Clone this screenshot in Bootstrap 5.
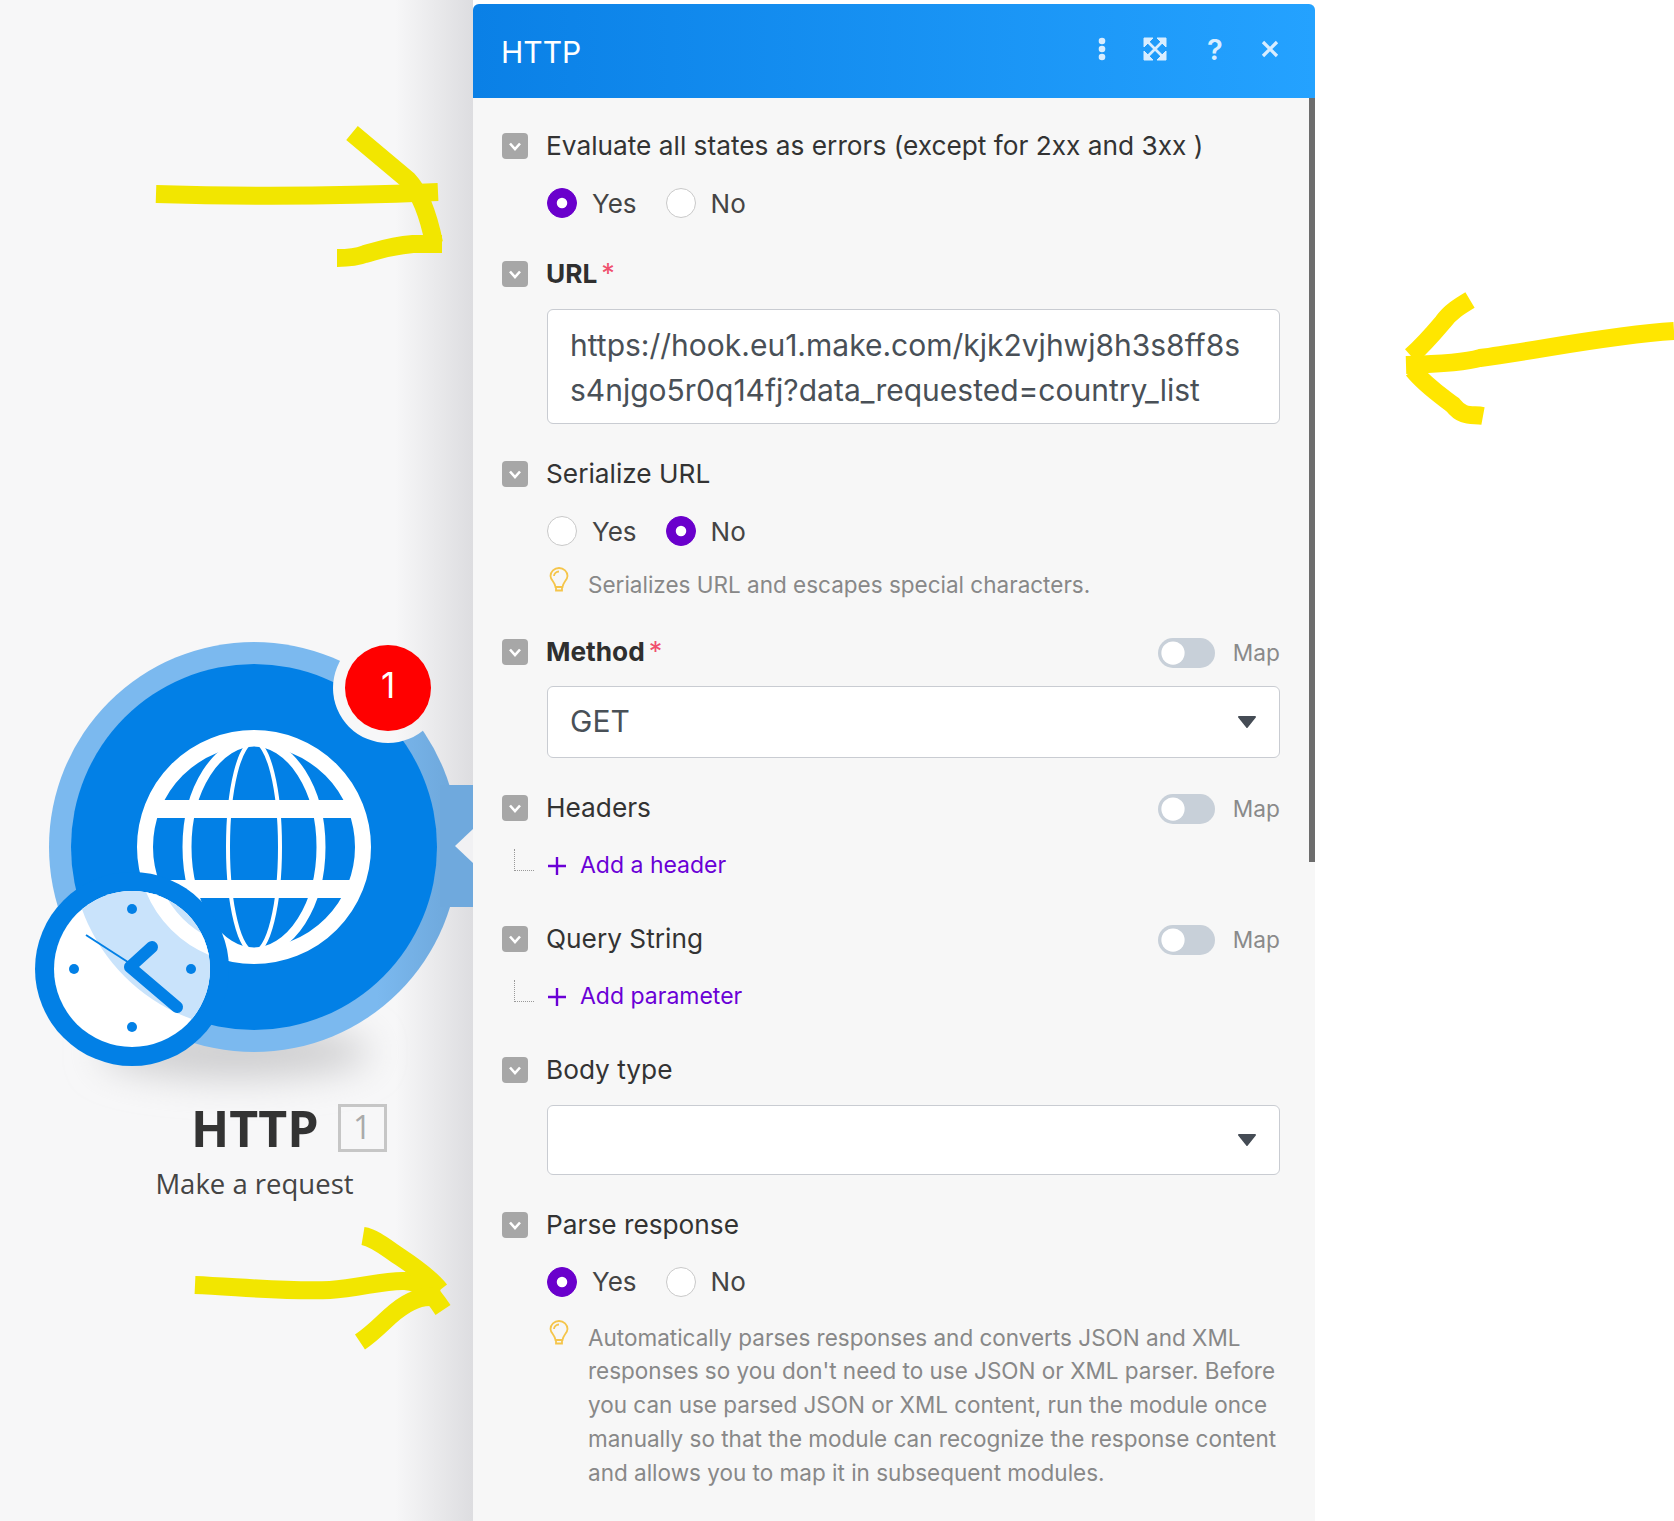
<!DOCTYPE html>
<html lang="en">
  <head>
    <meta charset="UTF-8" />
    <title>HTTP module</title>
    <link href="https://cdn.jsdelivr.net/npm/bootstrap@5.3.3/dist/css/bootstrap.min.css" rel="stylesheet" />
    <style>
      html, body { height: 1521px; overflow: hidden; background: #fff; }
      body { font-family: Inter, "Liberation Sans", sans-serif; position: relative; }
      .canvas-col {
        width: 473px; height: 1521px; padding-top: 640px; flex: none;
        background: linear-gradient(to right, #f7f7f8 0, #f7f7f8 395px, #dddde0 473px);
      }
      .node-art { display: block; width: 473px; height: 440px; overflow: visible; }
      .node-name { padding-left: 191px; margin-top: 24px; height: 48px; gap: 19px; position: relative; }
      .node-name b { font: 700 50px/48px "Open Sans", sans-serif; color: #333; }
      .node-num { width: 49px; height: 48px; border: 3px solid #c6c6c6; color: #aaa; font: 400 32px/40px "Open Sans", sans-serif; text-align: center; }
      .node-desc { width: 509px; margin-top: 12px; text-align: center; font: 400 27.500px/40px "Open Sans", sans-serif; color: #444; position: relative; }

      .panel-box { width: 842px; height: 1517px; margin-top: 4px; flex: none; background: #f7f7f7; position: relative; overflow: hidden; border-radius: 6px 6px 0 0; }
      .panel-head { height: 94px; padding: 0 35px 4px 28px; background: linear-gradient(to right, #0a80e6, #24a2ff); color: #fff; font-size: 30px; }
      .panel-head svg { display: block; }
      .head-title { margin-top: 6px; }
      .tool-gap-a { margin-left: 37px; }
      .tool-gap-b { margin-left: 34px; }
      .tool-help { width: 22px; text-align: center; color: #d8edff; font-size: 29px; font-weight: 600; line-height: 1; }
      .panel-body { padding: 31px 35px 0 29px; }
      .scroll-thumb { position: absolute; right: 0; top: 94px; width: 6px; height: 764px; background: #6d6d6d; }

      .label-row { height: 34px; font-size: 26.250px; line-height: 34px; color: #333; }
      .label-row b { font-weight: 700; color: #2f2f2f; }
      .req { color: #f0506e; font-size: 27px; margin-left: 4px; line-height: 30px; }
      .fold-box { width: 26px; height: 26px; border-radius: 4px; background: #a7a7a7; margin-right: 18px; flex: none; }
      .fold-box svg { display: block; }
      .block-gap { margin-top: 33px; }
      .gap-url { margin-top: 37px; }
      .gap-wide { margin-top: 39px; }
      .sub-row { margin-left: 45px; margin-top: 23px; height: 34px; gap: 29px; font-size: 26px; color: #444; }
      .sub-row .form-check { min-height: 0; padding: 0; margin: 0; gap: 15px; }
      .form-check-input[type=radio] {
        width: 30px; height: 30px; margin: 0; float: none; border: 1px solid #c9c9c9; background-color: #fff;
      }
      .form-check-input[type=radio]:checked {
        background-color: #6a00cc; border-color: #6a00cc;
        background-image: url("data:image/svg+xml,%3csvg xmlns='http://www.w3.org/2000/svg' viewBox='-4 -4 8 8'%3e%3ccircle r='1.5' fill='%23fff'/%3e%3c/svg%3e");
      }
      .map-toggle { gap: 18px; color: #8a8a8a; font-size: 22.700px; margin-top: 3px; }
      .map-toggle .form-switch { min-height: 0; padding: 0; margin: 0; }
      .map-toggle .form-check-input {
        width: 57px; height: 30px; margin: 0; float: none; border: 0; background-color: #c8d0d9; display: block;
        background-image: url("data:image/svg+xml,%3csvg xmlns='http://www.w3.org/2000/svg' viewBox='-4 -4 8 8'%3e%3ccircle r='3.1' fill='%23fff'/%3e%3c/svg%3e");
      }
      .field-input {
        display: block; margin-left: 45px; width: 733px; border: 1px solid #c9ccd2; border-radius: 6px; background-color: #fff;
        color: #495057; font-size: 30px; font-family: inherit; padding-left: 22px;
      }
      textarea.field-input { height: 115px; margin-top: 18px; padding: 13px 22px 9px; line-height: 45px; resize: none; overflow: hidden; }
      select.field-input {
        height: 72px; margin-top: 17px;
        background-image: url("data:image/svg+xml,%3csvg xmlns='http://www.w3.org/2000/svg' viewBox='0 0 20 12'%3e%3cpath d='M2 1h16l-8 10z' fill='%23454c55' stroke='%23454c55' stroke-width='2' stroke-linejoin='round'/%3e%3c/svg%3e");
        background-size: 20px 12px; background-position: right 22px center;
      }
      select.select-low { height: 70px; margin-top: 18px; }
      .hint-row { margin-left: 45px; margin-top: 20px; color: #888; font-size: 22.500px; line-height: 33.700px; }
      .hint-row.hint-long { margin-top: 22px; }
      .hint-row svg { flex: none; margin: -1px 19px 0 2px; }
      .add-row { height: 34px; margin-top: 24px; color: #6a00d6; font-size: 23px; }
      .tree-line { width: 20px; height: 22px; margin: -12px 13px 0 12px; border-left: 1px dotted #999; border-bottom: 1px dotted #999; flex: none; }
      .add-row svg { margin-right: 13px; }

      .ink-layer { position: absolute; left: 0; top: 0; width: 1674px; height: 1521px; pointer-events: none; }
      .ink-layer path { fill: none; stroke-width: 18; stroke-linejoin: round; }
    </style>
  </head>
  <body class="d-flex align-items-start">
    <div class="canvas-col">
      <svg class="node-art" viewBox="0 640 473 440">
        <defs>
          <filter id="soft" x="-30%" y="-150%" width="160%" height="400%"><feGaussianBlur stdDeviation="18" /></filter>
          <linearGradient id="ringFill" gradientUnits="userSpaceOnUse" x1="49" y1="0" x2="459" y2="0">
            <stop offset="0.8" stop-color="#7bb9ef" /><stop offset="0.97" stop-color="#6fa9dd" />
          </linearGradient>
          <linearGradient id="haloFill" gradientUnits="userSpaceOnUse" x1="395" y1="0" x2="473" y2="0">
            <stop offset="0" stop-color="#f7f7f8" /><stop offset="1" stop-color="#dddde0" />
          </linearGradient>
          <clipPath id="faceClip"><circle cx="132" cy="969" r="78" /></clipPath>
          <g id="globeRing"><circle cx="254" cy="847" r="109" fill="none" stroke="#fff" stroke-width="16" /></g>
        </defs>
        <ellipse cx="235" cy="1052" rx="135" ry="26" fill="#cdcdcf" filter="url(#soft)" />
        <circle cx="254" cy="847" r="205" fill="url(#ringFill)" />
        <path d="M440 785h33v122h-33z" fill="#6fa9dd" />
        <path d="M473 829l-18 17 18 17z" fill="#f1f1f3" />
        <circle cx="254" cy="847" r="183" fill="#0280e6" />
        <use href="#globeRing" />
        <ellipse cx="254" cy="847" rx="26" ry="105" fill="none" stroke="#fff" stroke-width="4" />
        <ellipse cx="254" cy="847" rx="67" ry="105" fill="none" stroke="#fff" stroke-width="9" />
        <rect x="150" y="800" width="208" height="18" fill="#fff" />
        <rect x="152" y="880" width="204" height="18" fill="#fff" />
        <circle cx="132" cy="969" r="97" fill="#0280e6" />
        <circle cx="132" cy="969" r="78" fill="#fff" />
        <g clip-path="url(#faceClip)">
          <circle cx="254" cy="847" r="183" fill="#c9e3fb" />
          <use href="#globeRing" />
        </g>
        <path d="M86 935l48 31" stroke="#0280e6" stroke-width="2" fill="none" />
        <path d="M130 967l22-20M130 967l47 40" stroke="#0280e6" stroke-width="12" stroke-linecap="round" fill="none" />
        <g fill="#0280e6">
          <circle cx="132" cy="909" r="5" /><circle cx="132" cy="1027" r="5" />
          <circle cx="74" cy="969" r="5" /><circle cx="191" cy="969" r="5" />
        </g>
        <circle cx="388" cy="688" r="55" fill="url(#haloFill)" />
        <circle cx="388" cy="688" r="43" fill="#f00" />
        <text x="388" y="698" text-anchor="middle" fill="#fff" font-family="Inter, sans-serif" font-size="35">1</text>
      </svg>
      <div class="node-name d-flex align-items-center">
        <b>HTTP</b><span class="node-num">1</span>
      </div>
      <div class="node-desc">Make a request</div>
    </div>

    <div class="panel-box">
      <div class="panel-head d-flex align-items-center justify-content-between">
        <span class="head-title">HTTP</span>
        <div class="d-flex align-items-center">
          <svg width="8" height="24" viewBox="0 0 8 24" fill="#d8edff"><circle cx="4" cy="4" r="3.300" /><circle cx="4" cy="12" r="3.300" /><circle cx="4" cy="20" r="3.300" /></svg>
          <svg class="tool-gap-a" width="24" height="24" viewBox="0 0 24 24" fill="#d8edff" stroke="#d8edff"><path d="M1 1h9L1 10zM23 1v9l-9-9zM23 23h-9l9-9zM1 23V14l9 9z" stroke-width="1" stroke-linejoin="round" /><path d="M4 4l16 16M20 4L4 20" stroke-width="2.600" fill="none" /></svg>
          <span class="tool-help tool-gap-a">?</span>
          <svg class="tool-gap-b" width="20" height="20" viewBox="0 0 20 20" stroke="#d8edff" stroke-width="3.300"><path d="M3 3l14 14M17 3L3 17" /></svg>
        </div>
      </div>
      <div class="scroll-thumb"></div>
      <div class="panel-body">
        <div class="label-row d-flex align-items-center">
          <span class="fold-box"><svg width="26" height="26" viewBox="0 0 26 26" fill="none" stroke="#fff" stroke-width="2.600"><path d="M8 10.500l5 5.500 5-5.500" /></svg></span>
          Evaluate all states as errors (except for 2xx and 3xx )
        </div>
        <div class="sub-row d-flex align-items-center">
          <label class="form-check d-flex align-items-center"><input class="form-check-input" type="radio" name="r1" checked />Yes</label>
          <label class="form-check d-flex align-items-center"><input class="form-check-input" type="radio" name="r1" />No</label>
        </div>

        <div class="label-row gap-url d-flex align-items-center">
          <span class="fold-box"><svg width="26" height="26" viewBox="0 0 26 26" fill="none" stroke="#fff" stroke-width="2.600"><path d="M8 10.500l5 5.500 5-5.500" /></svg></span>
          <b>URL</b><span class="req">*</span>
        </div>
        <textarea class="field-input form-control">https://hook.eu1.make.com/kjk2vjhwj8h3s8ff8s
s4njgo5r0q14fj?data_requested=country_list</textarea>

        <div class="label-row block-gap d-flex align-items-center">
          <span class="fold-box"><svg width="26" height="26" viewBox="0 0 26 26" fill="none" stroke="#fff" stroke-width="2.600"><path d="M8 10.500l5 5.500 5-5.500" /></svg></span>
          Serialize URL
        </div>
        <div class="sub-row d-flex align-items-center">
          <label class="form-check d-flex align-items-center"><input class="form-check-input" type="radio" name="r2" />Yes</label>
          <label class="form-check d-flex align-items-center"><input class="form-check-input" type="radio" name="r2" checked />No</label>
        </div>
        <div class="hint-row d-flex align-items-start">
          <svg width="20" height="28" viewBox="0 0 20 28" fill="none" stroke="#f5c54a" stroke-width="1.800"><path d="M6.500 20C6 15 1.500 13 1.500 9a8.500 8 0 0 1 17 0C18.500 13 14 15 13.500 20zM7 20v3.500h6V20M5 9a5 4.500 0 0 1 5-4.500" /></svg>
          <span>Serializes URL and escapes special characters.</span>
        </div>

        <div class="label-row block-gap d-flex align-items-center">
          <span class="fold-box"><svg width="26" height="26" viewBox="0 0 26 26" fill="none" stroke="#fff" stroke-width="2.600"><path d="M8 10.500l5 5.500 5-5.500" /></svg></span>
          <b>Method</b><span class="req">*</span>
          <div class="map-toggle d-flex align-items-center ms-auto"><div class="form-switch"><input class="form-check-input" type="checkbox" role="switch" /></div>Map</div>
        </div>
        <select class="field-input form-select"><option>GET</option></select>

        <div class="label-row block-gap d-flex align-items-center">
          <span class="fold-box"><svg width="26" height="26" viewBox="0 0 26 26" fill="none" stroke="#fff" stroke-width="2.600"><path d="M8 10.500l5 5.500 5-5.500" /></svg></span>
          Headers
          <div class="map-toggle d-flex align-items-center ms-auto"><div class="form-switch"><input class="form-check-input" type="checkbox" role="switch" /></div>Map</div>
        </div>
        <div class="add-row d-flex align-items-center">
          <span class="tree-line"></span>
          <svg width="20" height="20" viewBox="0 0 20 20" stroke="#6a00d6" stroke-width="2.400"><path d="M10 1v18M1 10h18" /></svg>
          Add a header
        </div>

        <div class="label-row gap-wide d-flex align-items-center">
          <span class="fold-box"><svg width="26" height="26" viewBox="0 0 26 26" fill="none" stroke="#fff" stroke-width="2.600"><path d="M8 10.500l5 5.500 5-5.500" /></svg></span>
          Query String
          <div class="map-toggle d-flex align-items-center ms-auto"><div class="form-switch"><input class="form-check-input" type="checkbox" role="switch" /></div>Map</div>
        </div>
        <div class="add-row d-flex align-items-center">
          <span class="tree-line"></span>
          <svg width="20" height="20" viewBox="0 0 20 20" stroke="#6a00d6" stroke-width="2.400"><path d="M10 1v18M1 10h18" /></svg>
          Add parameter
        </div>

        <div class="label-row gap-wide d-flex align-items-center">
          <span class="fold-box"><svg width="26" height="26" viewBox="0 0 26 26" fill="none" stroke="#fff" stroke-width="2.600"><path d="M8 10.500l5 5.500 5-5.500" /></svg></span>
          Body type
        </div>
        <select class="field-input form-select select-low"><option></option></select>

        <div class="label-row block-gap d-flex align-items-center">
          <span class="fold-box"><svg width="26" height="26" viewBox="0 0 26 26" fill="none" stroke="#fff" stroke-width="2.600"><path d="M8 10.500l5 5.500 5-5.500" /></svg></span>
          Parse response
        </div>
        <div class="sub-row d-flex align-items-center">
          <label class="form-check d-flex align-items-center"><input class="form-check-input" type="radio" name="r3" checked />Yes</label>
          <label class="form-check d-flex align-items-center"><input class="form-check-input" type="radio" name="r3" />No</label>
        </div>
        <div class="hint-row hint-long d-flex align-items-start">
          <svg width="20" height="28" viewBox="0 0 20 28" fill="none" stroke="#f5c54a" stroke-width="1.800"><path d="M6.500 20C6 15 1.500 13 1.500 9a8.500 8 0 0 1 17 0C18.500 13 14 15 13.500 20zM7 20v3.500h6V20M5 9a5 4.500 0 0 1 5-4.500" /></svg>
          <span>Automatically parses responses and converts JSON and XML responses so you don't need to use JSON or XML parser. Before you can use parsed JSON or XML content, run the module once manually so that the module can recognize the response content and allows you to map it in subsequent modules.</span>
        </div>
      </div>
    </div>

    <svg class="ink-layer" viewBox="0 0 1674 1521">
      <g stroke="#f2e600">
        <path d="M156 194C250 197 350 196 438 192" />
        <path d="M352 133L408 180Q425 198 434 243" />
        <path d="M442 244L413 244C390 246 380 250 365 254C355 258 345 258 337 258" />
        <path d="M195 1285C240 1287 290 1292 330 1290C360 1288 385 1280 405 1281C425 1283 433 1295 443 1310" />
        <path d="M363 1236C375 1238 385 1247 400 1257C415 1267 432 1280 440 1290" />
        <path d="M360 1342C375 1332 385 1320 395 1312C410 1300 420 1296 440 1297" />
      </g>
      <g stroke="#ffe600">
        <path d="M1406 365C1440 364 1470 361 1480 358C1540 350 1610 335 1674 331" />
        <path d="M1470 300C1460 306 1450 312 1443 322C1432 335 1420 348 1411 356" />
        <path d="M1413 370C1425 385 1440 395 1453 405C1463 418 1472 414 1483 416" />
      </g>
    </svg>
    <script src="https://cdn.jsdelivr.net/npm/bootstrap@5.3.3/dist/js/bootstrap.bundle.min.js"></script>
  </body>
</html>
